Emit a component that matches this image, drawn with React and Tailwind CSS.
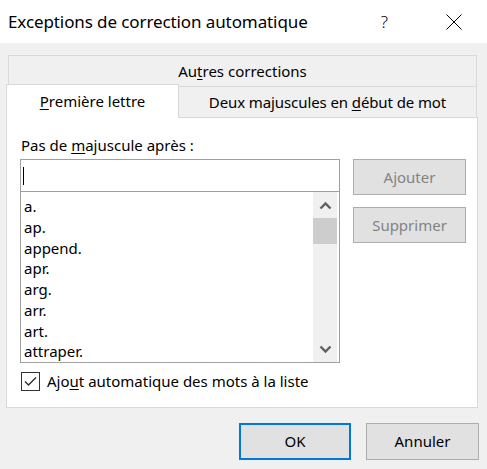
import React from 'react';

const items = ['a.', 'ap.', 'append.', 'apr.', 'arg.', 'arr.', 'art.', 'attraper.'];

function Chevron({ up }) {
  return (
    <svg width="13" height="9" viewBox="0 0 13 9" className="block">
      <path
        d={up ? 'M1.5 7.5 L6.5 2.5 L11.5 7.5' : 'M1.5 1.5 L6.5 6.5 L11.5 1.5'}
        fill="none"
        stroke="#606060"
        strokeWidth="2.4"
      />
    </svg>
  );
}

export default function App() {
  return (
    <div
      className="w-[487px] h-[469px] bg-[#f0f0f0] text-black overflow-hidden"
      style={{ fontFamily: '"Noto Sans", "Open Sans", sans-serif' }}
    >
      {/* title bar */}
      <div className="h-[43px] bg-white flex items-center">
        <span className="pl-[8px] text-[17px] leading-none tracking-[-0.1px]">Exceptions de correction automatique</span>
        <span className="ml-auto text-[17px] leading-none font-light">?</span>
        <svg width="16" height="16" viewBox="0 0 16 16" className="ml-[58px] mr-[25px]">
          <path d="M0.5 0.5 L15.5 15.5 M15.5 0.5 L0.5 15.5" stroke="#000" strokeWidth="1" fill="none" />
        </svg>
      </div>

      <div className="px-[6px] pt-[12px]">
        {/* tab rows */}
        <div className="ml-[2px] w-[469px] h-[32px] border border-b-0 border-[#d9d9d9] flex items-center justify-center text-[15px]">
          <span>
            Au<span className="underline underline-offset-2">t</span>res corrections
          </span>
        </div>
        <div className="flex items-end -mt-[3px] relative z-10">
          <div className="w-[173px] h-[34px] bg-white border border-b-0 border-[#d9d9d9] flex items-center justify-center text-[15px] -mb-px">
            <span>
              <span className="underline underline-offset-2">P</span>remière lettre
            </span>
          </div>
          <div className="w-[298px] h-[31px] border-t border-r border-[#d9d9d9] flex items-center justify-center text-[15px] tracking-[-0.1px]">
            <span>
              Deux majuscules en <span className="underline underline-offset-2">d</span>ébut de mot
            </span>
          </div>
        </div>

        {/* panel */}
        <div className="w-[472px] h-[291px] bg-white border border-[#d9d9d9] pt-[17px] pl-[13px]">
          <div className="flex">
            <div className="w-[320px]">
              <div className="h-[20px] text-[15px] leading-[20px] pl-[1px]">
                Pas de <span className="underline underline-offset-2">m</span>ajuscule après :
              </div>
              <div className="mt-[4px] h-[33px] border border-[#a0a0a0] flex items-center pl-[2px]">
                <div className="w-px h-[18px] bg-black" />
              </div>
              <div className="h-[171px] border border-t-0 border-[#a0a0a0] flex overflow-hidden">
                <div className="flex-1 pl-[3px] pt-[4px] text-[15px] leading-[20.75px]">
                  {items.map((t) => (
                    <div key={t}>{t}</div>
                  ))}
                </div>
                <div className="w-[24px] bg-[#f0f0f0] flex flex-col items-center mr-[2px]">
                  <div className="h-[26px] flex items-center justify-center">
                    <Chevron up />
                  </div>
                  <div className="w-[24px] h-[26px] bg-[#cdcdcd]" />
                  <div className="flex-1" />
                  <div className="h-[26px] flex items-center justify-center">
                    <Chevron />
                  </div>
                </div>
              </div>
            </div>
            <div className="ml-[13px] pt-[24px] flex flex-col gap-[12px]">
              <div className="w-[113px] h-[36px] bg-[#e1e1e1] border border-[#adadad] flex items-center justify-center text-[15px] text-[#838383]">
                Ajouter
              </div>
              <div className="w-[113px] h-[36px] bg-[#e1e1e1] border border-[#adadad] flex items-center justify-center text-[15px] text-[#838383]">
                Supprimer
              </div>
            </div>
          </div>
          <div className="mt-[8px] flex items-center">
            <div className="ml-[1px] w-[19px] h-[19px] border border-[#333] flex items-center justify-center">
              <svg width="15" height="15" viewBox="0 0 15 15">
                <path d="M2 7.5 L5.5 11 L13 3.5" fill="none" stroke="#333" strokeWidth="1.5" />
              </svg>
            </div>
            <span className="ml-[7px] text-[15px] leading-[20px]">
              Ajo<span className="underline underline-offset-2">u</span>t automatique des mots à la liste
            </span>
          </div>
        </div>

        {/* buttons */}
        <div className="flex justify-end gap-[15px] mt-[15px] mr-[2px]">
          <div className="w-[112px] h-[37px] bg-[#e1e1e1] border-2 border-[#0078d7] flex items-center justify-center text-[15px]">
            OK
          </div>
          <div className="w-[113px] h-[37px] bg-[#e1e1e1] border border-[#adadad] flex items-center justify-center text-[15px]">
            Annuler
          </div>
        </div>
      </div>
    </div>
  );
}
